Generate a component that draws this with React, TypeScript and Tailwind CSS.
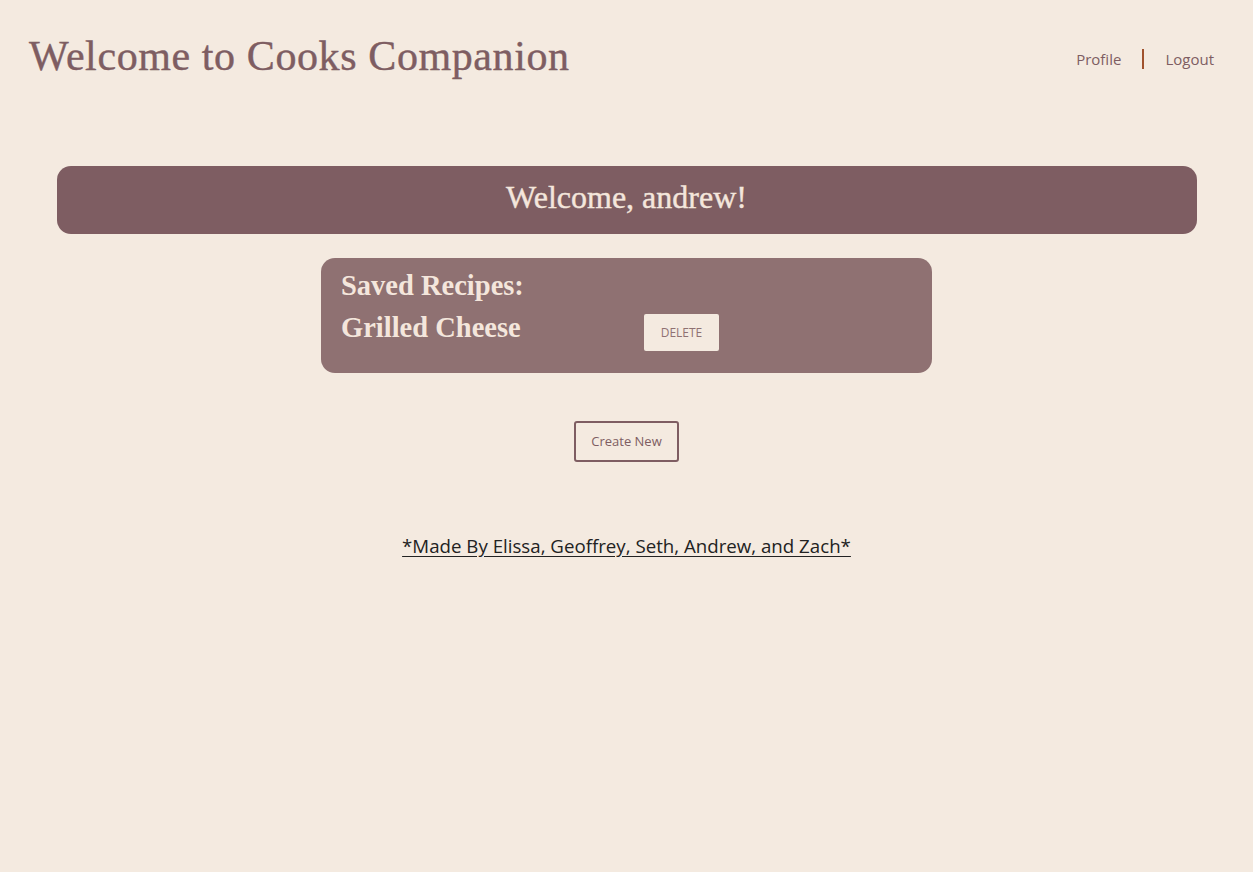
import React from 'react';

export default function App() {
  return (
    <div className="min-h-[872px] w-full bg-[#F4EAE0] font-['Open_Sans','Noto_Sans',sans-serif]">
      {/* Header */}
      <header className="flex items-center justify-between pl-[29px] pr-[39px] pt-[28px]">
        <h1 className="text-[42px] leading-[56px] text-[#7E5D62] font-['Liberation_Serif',serif] tracking-[0.6px] [-webkit-text-stroke:0.4px_#7E5D62]">
          Welcome to Cooks Companion
        </h1>
        <nav className="flex items-center text-[15px] text-[#7E5D62] mt-[6px]">
          <a href="#">Profile</a>
          <span className="mx-[21px] h-[20px] w-[2px] bg-[#A0522D]" />
          <a href="#">Logout</a>
        </nav>
      </header>

      <main className="flex flex-col items-center pt-[82px]">
        {/* Welcome banner */}
        <div className="w-[1140px] h-[68px] rounded-[14px] bg-[#7E5D62] flex items-center justify-center pb-[6px]">
          <h2 className="text-[32px] text-[#F4E6DC] font-['Liberation_Serif',serif] [-webkit-text-stroke:0.4px_#F4E6DC]">Welcome, andrew!</h2>
        </div>

        {/* Saved recipes */}
        <div className="mt-[24px] w-[611px] h-[115px] rounded-[14px] bg-[#8F7172] px-[20px] pt-[10px] text-[#F4E6DC] font-['Liberation_Serif',serif] font-bold">
          <h3 className="text-[28.5px] leading-[36px]">Saved Recipes:</h3>
          <div className="flex items-center">
            <span className="text-[28.5px] leading-[36px] w-[303px]">Grilled Cheese</span>
            <button className="mt-[10px] w-[75px] h-[37px] bg-[#F4EAE0] rounded-[2px] text-[12px] font-normal text-[#8F7172] font-['Open_Sans',sans-serif]">
              DELETE
            </button>
          </div>
        </div>

        {/* Create New */}
        <button className="mt-[48px] w-[105px] h-[41px] border-2 border-[#7E5D62] rounded-[3px] text-[13px] text-[#7E5D62]">
          Create New
        </button>

        {/* Footer */}
        <p className="mt-[70px] text-[18.7px] text-[#222] underline underline-offset-[3px]">
          *Made By Elissa, Geoffrey, Seth, Andrew, and Zach*
        </p>
      </main>
    </div>
  );
}
